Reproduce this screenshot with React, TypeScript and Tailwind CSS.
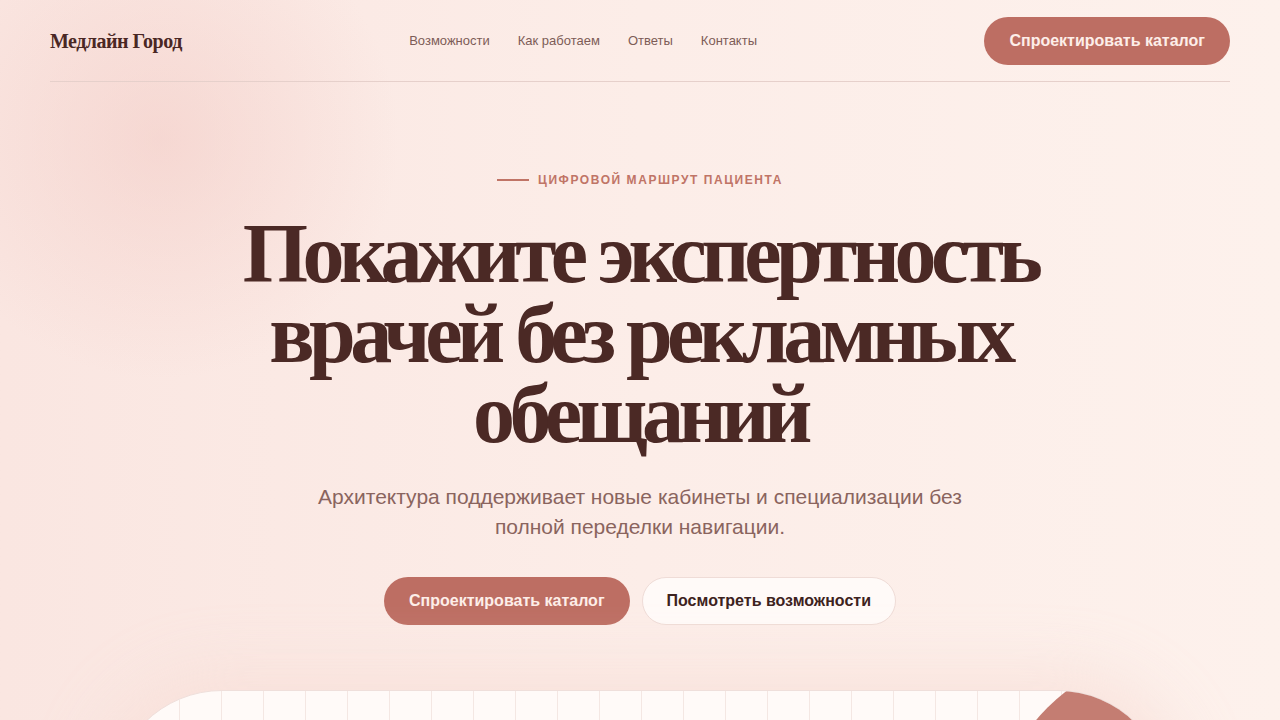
import React from 'react';

const navLinks = ['Возможности', 'Как работаем', 'Ответы', 'Контакты'];

const gridLines = Array.from({ length: 26 }, (_, i) => i);

export default function App() {
  return (
    <div
      className="relative min-h-[720px] w-full overflow-hidden bg-[#fdf0eb]"
      style={{ fontFamily: '"Liberation Sans", Arial, sans-serif' }}
    >
      {/* soft background wash */}
      <div className="pointer-events-none absolute inset-0 bg-gradient-to-r from-[#fae6e1] via-[#fcede8] to-[#fdf1ec]" />
      <div className="pointer-events-none absolute -left-[110px] -top-[110px] h-[500px] w-[540px] rounded-full bg-[radial-gradient(circle,rgba(240,196,190,0.45)_0%,rgba(240,196,190,0)_65%)]" />

      <div className="relative">
        {/* Header */}
        <header className="mx-[50px] flex h-[82px] items-center justify-between border-b border-[#e6d0cb]">
          <div
            className="text-[20px] font-bold tracking-[-0.025em] text-[#4a2724]"
            style={{ fontFamily: '"Liberation Serif", "Times New Roman", serif' }}
          >
            Медлайн Город
          </div>
          <nav className="flex items-center gap-[28px] text-[13px] text-[#7d5c57]">
            {navLinks.map((l) => (
              <a key={l} href="#" className="hover:text-[#4a2724]">
                {l}
              </a>
            ))}
          </nav>
          <button className="h-[48px] rounded-full bg-[#bd6e63] px-[25px] text-[16px] font-bold text-[#fdeee9]">
            Спроектировать каталог
          </button>
        </header>

        {/* Hero */}
        <section className="flex flex-col items-center pt-[89px] text-center">
          <div className="flex items-center gap-[9px] text-[12px] font-bold uppercase tracking-[0.13em] text-[#c07466]">
            <span className="h-[2px] w-[32px] bg-[#c07466]" />
            Цифровой маршрут пациента
          </div>

          <h1
            className="mt-[25px] max-w-[860px] text-[84px] font-bold leading-[80px] tracking-[-0.066em] text-[#4b2925]"
            style={{ fontFamily: '"Liberation Serif", "Times New Roman", serif' }}
          >
            Покажите экспертность врачей без рекламных обещаний
          </h1>

          <p className="mt-[28px] max-w-[660px] text-[21px] leading-[30px] text-[#8a645e]">
            Архитектура поддерживает новые кабинеты и специализации без полной переделки навигации.
          </p>

          <div className="mt-[35px] flex items-center gap-[12px]">
            <button className="h-[48px] rounded-full bg-[#bd6e63] px-[25px] text-[16px] font-bold text-[#fdeee9]">
              Спроектировать каталог
            </button>
            <button className="h-[48px] rounded-full border border-[#efdcd7] bg-[#fffaf8] px-[24px] text-[16px] font-bold text-[#3d2220]">
              Посмотреть возможности
            </button>
          </div>

          {/* Preview card */}
          <div className="relative mt-[65px] h-[300px] w-[1056px] overflow-hidden rounded-[110px] border border-[#efdfdb] bg-[#fffaf8] shadow-[0_0_60px_20px_rgba(248,222,215,0.7)]">
            <div className="absolute inset-0 flex pl-[24px]">
              {gridLines.map((i) => (
                <div key={i} className="h-full w-[42px] shrink-0 border-l border-[#f4e7e3]" />
              ))}
            </div>
            <div className="absolute left-[876px] -top-[42px] h-[400px] w-[400px] rounded-full bg-[#c47d72]" />
          </div>
        </section>
      </div>
    </div>
  );
}
